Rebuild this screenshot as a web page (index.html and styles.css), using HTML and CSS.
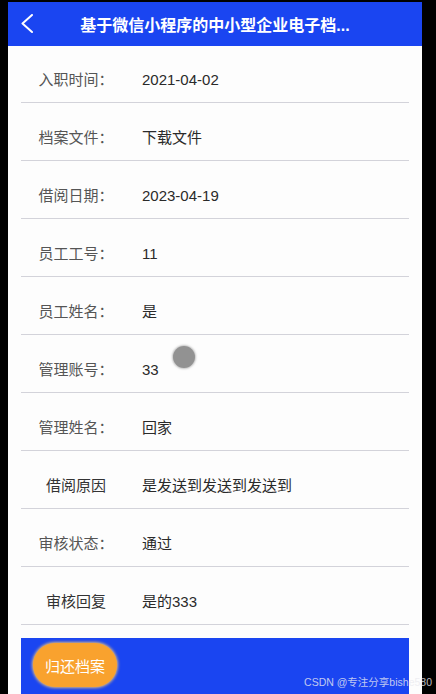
FILE: index.html
```html
<!DOCTYPE html>
<html lang="zh-CN">
<head>
<meta charset="utf-8">
<title>档案详情</title>
<link rel="stylesheet" href="styles.css">
</head>
<body>
<div class="page">
  <header class="header">
    <div class="back">
      <svg width="12" height="20" viewBox="0 0 12 20"><polyline points="11,1 1.5,9.5 11,18" fill="none" stroke="#fff" stroke-width="2" stroke-linecap="round" stroke-linejoin="round"/></svg>
    </div>
    <div class="title">基于微信小程序的中小型企业电子档...</div>
    <div></div>
  </header>
  <div class="list">
    <div class="row first"><span class="label">入职时间：</span><span class="value">2021-04-02</span></div>
    <div class="row"><span class="label">档案文件：</span><span class="value">下载文件</span></div>
    <div class="row"><span class="label">借阅日期：</span><span class="value">2023-04-19</span></div>
    <div class="row"><span class="label">员工工号：</span><span class="value">11</span></div>
    <div class="row"><span class="label">员工姓名：</span><span class="value">是</span></div>
    <div class="row"><span class="label">管理账号：</span><span class="value">33</span></div>
    <div class="row"><span class="label">管理姓名：</span><span class="value">回家</span></div>
    <div class="row"><span class="label dark">借阅原因</span><span class="value">是发送到发送到发送到</span></div>
    <div class="row"><span class="label">审核状态：</span><span class="value">通过</span></div>
    <div class="row"><span class="label dark">审核回复</span><span class="value">是的333</span></div>
  </div>
  <div class="bar">
    <div class="btn">归还档案</div>
  </div>
</div>
<div class="cursor"></div>
<div class="watermark">CSDN @专注分享bishe580</div>
</body>
</html>
```
FILE: styles.css
```css
html, body {
  margin: 0;
  padding: 0;
  background: #000;
  height: 694px;
  overflow: hidden;
}
body {
  position: relative;
  font-family: "Liberation Sans", "Noto Sans CJK SC", sans-serif;
}
.page {
  margin: 2px 0 0 8px;
  width: 414px;
  height: 692px;
  background: #fdfdfd;
  overflow: hidden;
}
.header {
  height: 44px;
  background: #1a45f1;
  display: grid;
  grid-template-columns: 60px 1fr 60px;
  align-items: center;
}
.back {
  padding-left: 13px;
  height: 20px;
  display: flex;
  align-items: center;
}
.title {
  color: #fff;
  font-size: 16px;
  font-weight: bold;
  text-align: center;
  white-space: nowrap;
}
.list {
  margin: 0 13px;
}
.row {
  display: flex;
  padding: 24px 0 11px;
  line-height: 22px;
  font-size: 15px;
  border-bottom: 1px solid #d3d3da;
}
.row.first {
  padding-top: 23px;
}
.label {
  width: 110px;
  text-align: center;
  color: #555;
}
.label.dark {
  color: #333;
}
.value {
  margin-left: 11px;
  color: #2a2a2a;
}
.bar {
  margin: 13px 13px 0;
  height: 62px;
  background: #1a45f1;
  padding: 5px 12px;
}
.btn {
  width: 84px;
  height: 44px;
  border-radius: 22px;
  background: #f9a22e;
  color: #fff;
  font-size: 15px;
  display: flex;
  align-items: center;
  justify-content: center;
  box-shadow: 0 0 3px 1px rgba(255, 205, 110, 0.85);
}
.cursor {
  position: absolute;
  left: 173px;
  top: 346px;
  width: 22px;
  height: 22px;
  border-radius: 50%;
  background: #929292;
  box-shadow: 0 0 2px 1px rgba(170, 170, 170, 0.7);
}
.watermark {
  position: absolute;
  right: 4px;
  top: 674px;
  font-size: 10.5px;
  color: rgba(235, 235, 240, 0.8);
  white-space: nowrap;
}
```
